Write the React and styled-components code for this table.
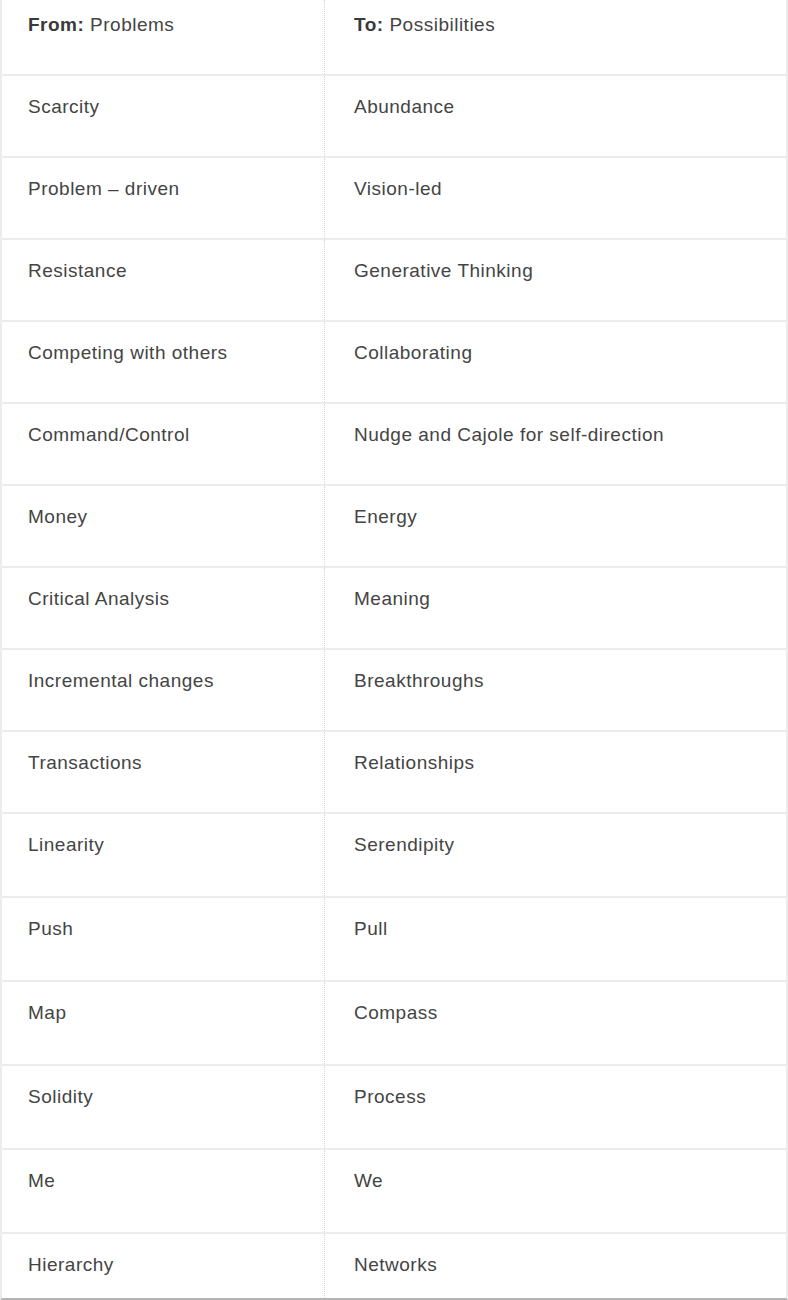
import React from "react";
import styled, { createGlobalStyle } from "styled-components";

const GlobalStyle = createGlobalStyle`
  html, body { margin: 0; padding: 0; background: #fff; }
  body {
    font-family: "Liberation Sans", Arial, sans-serif;
    -webkit-font-smoothing: antialiased;
  }
`;

const Frame = styled.div`
  width: 788px;
  height: 1300px;
  box-sizing: border-box;
  overflow: hidden;
  border-left: 2px solid #ececec;
  border-right: 2px solid #ececec;
  border-bottom: 2px solid #b4b4b4;
  background: #fff;
`;

const Row = styled.div`
  display: grid;
  grid-template-columns: 322px 1fr;
  height: ${(p) => p.$h}px;
  border-bottom: 2px solid #ececec;
`;

const Cell = styled.div`
  box-sizing: border-box;
  padding-top: ${(p) => (p.$head ? 13 : 19)}px;
  padding-left: ${(p) => (p.$right ? 29 : 26)}px;
  border-left: ${(p) => (p.$right ? "1px dotted #d6d6d6" : "none")};
  font-size: 19px;
  line-height: 24px;
  color: #444;
  letter-spacing: 0.5px;
`;

const Strong = styled.strong`
  font-weight: 700;
  color: #3a3a3a;
`;

const rows = [
  ["Scarcity", "Abundance"],
  ["Problem \u2013 driven", "Vision-led"],
  ["Resistance", "Generative Thinking"],
  ["Competing with others", "Collaborating"],
  ["Command/Control", "Nudge and Cajole for self-direction"],
  ["Money", "Energy"],
  ["Critical Analysis", "Meaning"],
  ["Incremental changes", "Breakthroughs"],
  ["Transactions", "Relationships"],
  ["Linearity", "Serendipity"],
  ["Push", "Pull"],
  ["Map", "Compass"],
  ["Solidity", "Process"],
  ["Me", "We"],
  ["Hierarchy", "Networks"],
];

export default function App() {
  return (
    <>
      <GlobalStyle />
      <Frame>
        <Row $h={74}>
          <Cell $head>
            <Strong>From:</Strong> Problems
          </Cell>
          <Cell $head $right>
            <Strong>To:</Strong> Possibilities
          </Cell>
        </Row>
        {rows.map(([a, b], i) => (
          <Row key={a} $h={i >= 9 ? 82 : 80}>
            <Cell>{a}</Cell>
            <Cell $right>{b}</Cell>
          </Row>
        ))}
      </Frame>
    </>
  );
}
